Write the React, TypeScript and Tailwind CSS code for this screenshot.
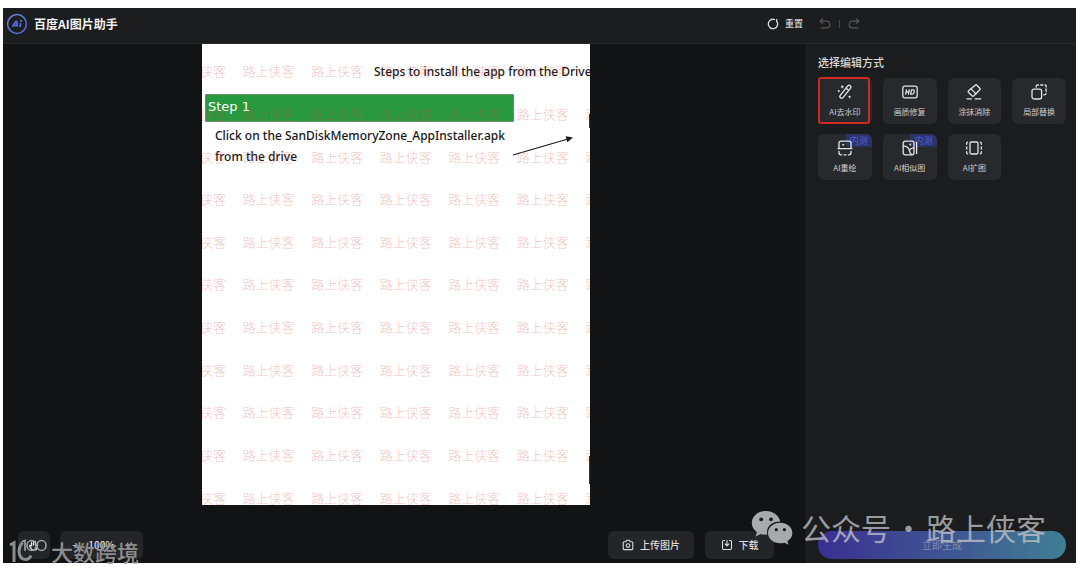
import React from "react";

const stroke = {
  fill: "none",
  stroke: "currentColor",
  strokeWidth: 1.3,
  strokeLinecap: "round" as const,
  strokeLinejoin: "round" as const,
};

function WandIcon() {
  return (
    <svg viewBox="0 0 16 16" className="size-4" {...stroke} aria-hidden="true">
      <path d="M10.7 1.9q1.2-1.2 2.5-.1t.2 2.5L6 13.6q-1.2 1.2-2.5.2t-.2-2.5z" />
      <path d="M9.2 4.3l2.3 2" />
      <path d="M5.2 1.7v2M4.2 2.7h2" strokeWidth="1.1" />
      <path d="M1.8 6.4v1.2M1.2 7h1.2" strokeWidth="1.1" />
      <path d="M12.6 12v1.6M11.8 12.8h1.6" strokeWidth="1.1" />
    </svg>
  );
}

function HdIcon() {
  return (
    <svg viewBox="0 0 16 16" className="size-4" {...stroke} aria-hidden="true">
      <rect x="0.8" y="2.2" width="14.4" height="11.6" rx="2" />
      <path d="M4.5 5.8l-.8 4.4M7.3 5.8l-.8 4.4M4.1 8h2.8M9.5 5.8h1.6c2 0 1.5 4.4-1 4.4H8.7z" />
    </svg>
  );
}

function EraserIcon() {
  return (
    <svg viewBox="0 0 16 16" className="size-4" {...stroke} aria-hidden="true">
      <path d="M9.2 1.2q.8-.8 1.6 0l3 3q.8.8 0 1.6l-6 6q-.9.8-1.8 0L2.6 8.5q-.8-.9 0-1.7z" />
      <path d="M5 4.9l5 5M1 14.8h4.5M9.2 14.8h5.6" />
    </svg>
  );
}

function ReplaceIcon() {
  return (
    <svg viewBox="0 0 16 16" className="size-4" {...stroke} aria-hidden="true">
      <rect x="1" y="5.2" width="9.6" height="9.8" rx="2" />
      <path d="M5.2 3V2.4Q5.2 1 6.8 1h.7M9.7 1h2.1M14 1h.2q.9 0 .9 1v1M15.1 5v2.4M15.1 9.3q0 1.5-1.5 1.5h-.8" />
    </svg>
  );
}

function RedrawIcon() {
  return (
    <svg viewBox="0 0 16 16" className="size-4" {...stroke} aria-hidden="true">
      <path d="M2 8.6V3.2q0-2 2-2h8q2 0 2 2v5.400M1 8.600h14M2 11.400v1.400q0 2 2 2h.6M7 14.800h2M11.400 14.800h.6q2 0 2-2v-1.400" />
      <circle cx="6.2" cy="4.800" r="1" fill="currentColor" stroke="none" />
    </svg>
  );
}

function SimilarIcon() {
  return (
    <svg viewBox="0 0 16 16" className="size-4" {...stroke} aria-hidden="true">
      <rect x="1.2" y="1.2" width="10.8" height="13.6" rx="2" />
      <path d="M1.4 6.200c4 0 5.600 2.400 6 4.400.3 1.800 1 3 2.400 4M7.400 10q1.600-2 4.400-2.200M14.600 2.400v11.200" />
      <circle cx="8.2" cy="4.600" r="1" fill="currentColor" stroke="none" />
    </svg>
  );
}

function ExpandIcon() {
  return (
    <svg viewBox="0 0 16 16" className="size-4" {...stroke} aria-hidden="true">
      <rect x="4" y="2" width="8" height="12" rx="1.5" />
      <path d="M1.6 2.2Q.7 2.4.7 3.3v1M.7 6.8v2.4M.7 11.7v1q0 .9.9 1.1M14.4 2.2q.9.2.9 1.1v1M15.3 6.8v2.4M15.3 11.7v1q0 .9-.9 1.1" />
    </svg>
  );
}

const tools = [
  { label: "AI去水印", Icon: WandIcon, active: true },
  { label: "画质修复", Icon: HdIcon },
  { label: "涂抹消除", Icon: EraserIcon },
  { label: "局部替换", Icon: ReplaceIcon },
  { label: "AI重绘", Icon: RedrawIcon, beta: true },
  { label: "AI相似图", Icon: SimilarIcon, beta: true },
  { label: "AI扩图", Icon: ExpandIcon },
];

function Header() {
  return (
    <header className="flex h-9 shrink-0 items-center justify-between border-b border-[#27282a] bg-[#1c1d1f] pb-1 pl-[3px] pr-[216px]">
      <div className="flex items-center gap-1.5">
        <svg viewBox="0 0 22 22" className="size-[22px]" fill="none" aria-hidden="true">
          <defs>
            <linearGradient id="ring" x1="0" y1="0" x2="1" y2="1">
              <stop offset="0" stopColor="#9a70d8" />
              <stop offset="0.45" stopColor="#487fd0" />
              <stop offset="1" stopColor="#6258dc" />
            </linearGradient>
          </defs>
          <circle cx="11" cy="11" r="9.4" stroke="url(#ring)" strokeWidth="1.5" />
          <path d="M6.4 13.7l3.4-5.2h.9l.7 5.2M9 13.3l.8-1.8" stroke="#5667e6" strokeWidth="1.8" strokeLinejoin="round" />
          <path d="M14.7 10l-.7 3.8" stroke="#5667e6" strokeWidth="1.8" />
          <circle cx="15" cy="8" r="0.9" fill="#5aa4e8" />
        </svg>
        <h1 className="text-[12px] font-bold leading-4 text-[#f2f2f2]">百度AI图片助手</h1>
      </div>
      <div className="flex items-center">
        <button className="flex items-center gap-1.5 text-[9px] font-medium leading-4 text-[#dddddd]">
          <svg viewBox="0 0 12 12" className="size-3" {...stroke} aria-hidden="true">
            <path d="M7.4 1.5A4.7 4.7 0 1 0 9.6 3M9.7 1.4v1.8" />
          </svg>
          重置
        </button>
        <div className="ml-4 flex items-center gap-2 text-[#55565a]">
          <button aria-label="撤销">
            <svg viewBox="0 0 12 12" className="size-3" {...stroke} strokeWidth={1.2} aria-hidden="true">
              <path d="M3.5 1L1.2 3.2l2.3 2.2M1.5 3.2h6a3.2 3.2 0 0 1 0 6.6H2" />
            </svg>
          </button>
          <span className="h-2 w-px bg-[#45464a]" />
          <button aria-label="重做">
            <svg viewBox="0 0 12 12" className="size-3" {...stroke} strokeWidth={1.2} aria-hidden="true">
              <path d="M8.5 1l2.3 2.2-2.3 2.2M10.5 3.2h-6a3.2 3.2 0 0 0 0 6.6H10" />
            </svg>
          </button>
        </div>
      </div>
    </header>
  );
}

function Paper() {
  return (
    <div className="relative ml-[199px] h-[461px] w-[388px] overflow-hidden bg-white font-['Noto_Sans',sans-serif] text-[#171717]">
      <p className="whitespace-nowrap pl-[172px] pt-5 text-[12px] font-medium leading-4">Steps to install the app from the Drive</p>
      <h2 className="ml-[3px] mt-3.5 flex h-7 w-[309px] items-center rounded-[1px] border border-[#6b8f70] bg-[#28993f] pb-0.5 pl-0.5 font-['DejaVu_Sans',sans-serif] text-[13px] leading-4 text-white">
        Step 1
      </h2>
      <p className="mt-[3px] w-[320px] pl-[13px] text-[12px] font-medium leading-[21px]">
        Click on the SanDiskMemoryZone_AppInstaller.apk
        <br />
        from the drive
      </p>
      <svg viewBox="0 0 62 22" className="absolute left-[310px] top-[91px] h-[22px] w-[62px]" aria-hidden="true">
        <path d="M1 20L56 4" stroke="#171717" strokeWidth="1.3" />
        <path d="M61 2.5l-7.3-1.200 1.600 6z" fill="#171717" />
      </svg>
      <div className="absolute -left-7 top-1.5 grid h-[469px] w-[480px] grid-cols-7 grid-rows-11 items-center font-['Noto_Sans_CJK_SC',sans-serif] text-[13px] font-light leading-4 text-[#d04a40]/35">
        {Array.from({ length: 77 }, (_, i) => (
          <span key={i} className="whitespace-nowrap">
            路上侠客
          </span>
        ))}
      </div>
      <span className="absolute right-0 top-[70px] h-[14px] w-px bg-[#333333]" />
      <span className="absolute right-0 top-[412px] h-7 w-px bg-[#333333]" />
    </div>
  );
}

function BottomBar() {
  const btn = "flex h-7 items-center justify-center gap-1.5 rounded-md bg-[#242529] text-[10px] font-medium leading-4 text-[#dcdcdc]";
  return (
    <div className="mt-auto flex items-center justify-between pb-1 pl-[15px] pr-8">
      <div className="flex gap-2.5">
        <button className={`${btn} w-8`} aria-label="移动画布">
          <svg viewBox="0 0 12 12" className="size-3" {...stroke} aria-hidden="true">
            <path d="M3.5 7V3.2M5.5 6V1.8M7.5 6V2.4M9.5 6.5V4M3.5 7L2 6.2q-.8.8 0 1.8l2 2.8h4q1.5-1 1.5-4" />
          </svg>
        </button>
        <div className={`${btn} w-[83px]`}>
          <button aria-label="缩小" className="px-1">−</button>
          <span>100%</span>
          <button aria-label="放大" className="px-1">+</button>
        </div>
      </div>
      <div className="flex gap-[11px]">
        <button className={`${btn} w-[86px]`}>
          <svg viewBox="0 0 12 12" className="size-3" {...stroke} strokeWidth={1.1} aria-hidden="true">
            <path d="M2.2 2.8h1.6l.8-1.5h2.8l.8 1.5h1.6q1 0 1 1v5.8q0 1-1 1H2.2q-1 0-1-1V3.800q0-1 1-1z" />
            <circle cx="6" cy="6.6" r="1.8" />
          </svg>
          上传图片
        </button>
        <button className={`${btn} w-[69px]`}>
          <svg viewBox="0 0 12 12" className="size-3" {...stroke} strokeWidth={1.1} aria-hidden="true">
            <path d="M3.5 1.500h-.8q-1.2 0-1.2 1.200v6.600q0 1.200 1.200 1.200h6.600q1.200 0 1.200-1.200V2.700q0-1.200-1.200-1.200h-.8M6 1.500v5.200M4.200 5L6 6.800 7.800 5" />
          </svg>
          下载
        </button>
      </div>
    </div>
  );
}

function Sidebar() {
  return (
    <aside className="flex w-[270px] shrink-0 flex-col border-l border-[#222326] bg-[#1b1c1e] pb-1 pl-[11px] pr-2.5 pt-2.5">
      <h2 className="text-[11px] font-medium leading-4 text-[#d8d8d8]">选择编辑方式</h2>
      <div className="mt-2 grid grid-cols-4 gap-x-[11px] gap-y-2.5">
        {tools.map(({ label, Icon, active, beta }) => (
          <button
            key={label}
            className="relative flex h-[46px] flex-col items-center gap-1.5 rounded-md bg-[#28292c] pt-1.5 text-[#e4e4e4]"
          >
            {beta && (
              <span className="absolute right-0 top-0 rounded-bl-[3px] rounded-tr-md bg-[#2b3464] px-1 text-[9px] leading-[13px] text-[#4b5fe0]">
                内测
              </span>
            )}
            <span className="relative">
              <Icon />
            </span>
            <span className="whitespace-nowrap text-[8px] leading-3 text-[#cfcfcf]">{label}</span>
            {active && <span className="absolute -top-px bottom-0 left-0 right-0.5 rounded-[3px] border-2 border-[#cf2a22]" />}
          </button>
        ))}
      </div>
      <button className="mt-auto h-7 rounded-full bg-gradient-to-r from-[#3a2f92] via-[#3f5392] to-[#3f7f94] text-[10px] leading-4 text-[#7f8cae]">
        立即生成
      </button>
    </aside>
  );
}

function Credits() {
  return (
    <>
      <div className="pointer-events-none absolute bottom-4 right-[30px] flex items-center gap-2 text-[#c4c6ca]/75">
        <svg viewBox="0 0 42 35" className="h-[35px] w-[42px]" aria-hidden="true">
          <path
            d="M15 1C7 1 .8 6.3.8 13c0 3.8 2 7 5.2 9.2l-1.400 4.400 5.200-2.700c2 .6 4 .9 6.400.7C15 17 20 11.500 29.300 11.500 27.800 5.500 22 1 15 1z"
            fill="#a8a9aa"
          />
          <path
            d="M29.200 12.800c-7 0-12.200 4.500-12.200 10.200s5.300 10.300 12.200 10.300c1.500 0 3-.2 4.300-.6l4 2-1.100-3.500c3-1.900 5-4.800 5-8.200 0-5.700-5.400-10.200-12.200-10.200z"
            fill="#a8a9aa"
          />
          <circle cx="10.2" cy="9.3" r="1.9" fill="#191a1c" />
          <circle cx="20" cy="9.3" r="1.9" fill="#191a1c" />
          <circle cx="25.3" cy="19.7" r="1.6" fill="#191a1c" />
          <circle cx="33.4" cy="19.7" r="1.6" fill="#191a1c" />
        </svg>
        <div className="flex whitespace-nowrap text-[30px] leading-10">
          <span>公众号</span>
          <span className="w-[35px] text-center">·</span>
          <span>路上侠客</span>
        </div>
      </div>
      <div className="pointer-events-none absolute bottom-0 left-[6px] flex items-end gap-1 text-[#8c8d8f]">
        <svg viewBox="0 0 38 26" className="h-[26px] w-[38px]" fill="none" stroke="#a2a3a4" aria-hidden="true">
          <path d="M1 8l4-2.200V25" stroke="#8c8d8f" strokeWidth="3" />
          <path d="M13.500 5.500Q10 9.500 10 14.500q.6 8 6.500 8 4 0 5.500-4" stroke="#8c8d8f" strokeWidth="3" />
          <path d="M13 4.800l3-1.300V14" strokeWidth="1.600" />
          <ellipse cx="22.500" cy="8.500" rx="4.500" ry="5" strokeWidth="1.600" />
          <ellipse cx="32.500" cy="8.500" rx="4.500" ry="5" strokeWidth="1.600" />
        </svg>
        <span className="text-[22px] font-medium leading-6">大数跨境</span>
      </div>
    </>
  );
}

export default function App() {
  return (
    <div className="flex min-h-screen flex-col bg-white pb-[9px] pl-[3px] pr-1 pt-2 font-['Noto_Sans_CJK_SC',sans-serif]">
      <div className="relative flex flex-1 flex-col bg-[#121315]">
        <Header />
        <div className="flex flex-1">
          <main className="flex min-w-0 flex-1 flex-col">
            <Paper />
            <BottomBar />
          </main>
          <Sidebar />
        </div>
        <Credits />
      </div>
    </div>
  );
}
